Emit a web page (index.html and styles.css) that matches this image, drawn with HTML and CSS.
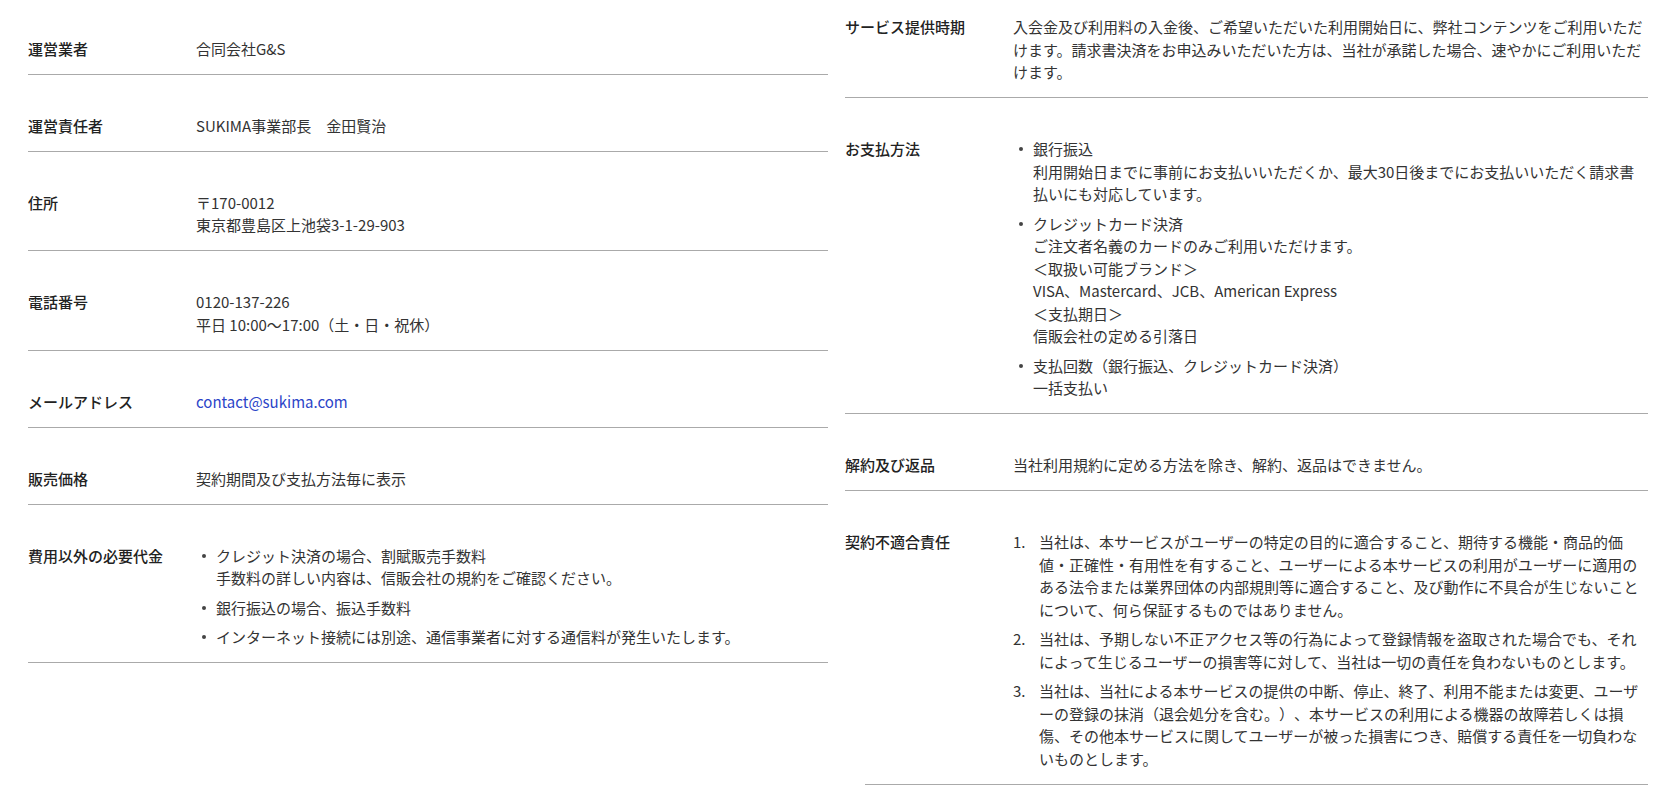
FILE: index.html
```html
<!DOCTYPE html>
<html lang="ja">
<head>
    <meta charset="UTF-8">
    <meta name="viewport" content="width=device-width, initial-scale=1.0">
    <title>特定商取引法に基づく表記</title>
    <link rel="stylesheet" href="styles.css">
</head>
<body>

    <div class="law">
        <!-- 左カラム -->
        <div class="col col-left">
            <div class="row">
                <div class="label">運営業者</div>
                <div class="value">合同会社G&amp;S</div>
            </div>
            <div class="row">
                <div class="label">運営責任者</div>
                <div class="value">SUKIMA事業部長　金田賢治</div>
            </div>
            <div class="row">
                <div class="label">住所</div>
                <div class="value">〒170-0012<br>東京都豊島区上池袋3-1-29-903</div>
            </div>
            <div class="row">
                <div class="label">電話番号</div>
                <div class="value">0120-137-226<br>平日 10:00〜17:00（土・日・祝休）</div>
            </div>
            <div class="row">
                <div class="label">メールアドレス</div>
                <div class="value"><a href="mailto:contact@sukima.com">contact@sukima.com</a></div>
            </div>
            <div class="row">
                <div class="label">販売価格</div>
                <div class="value">契約期間及び支払方法毎に表示</div>
            </div>
            <div class="row">
                <div class="label">費用以外の必要代金</div>
                <div class="value">
                    <ul class="dots">
                        <li>クレジット決済の場合、割賦販売手数料<br>手数料の詳しい内容は、信販会社の規約をご確認ください。</li>
                        <li>銀行振込の場合、振込手数料</li>
                        <li>インターネット接続には別途、通信事業者に対する通信料が発生いたします。</li>
                    </ul>
                </div>
            </div>
        </div>

        <!-- 右カラム -->
        <div class="col col-right">
            <div class="row">
                <div class="label">サービス提供時期</div>
                <div class="value">入会金及び利用料の入金後、ご希望いただいた利用開始日に、弊社コンテンツをご利用いただけます。請求書決済をお申込みいただいた方は、当社が承諾した場合、速やかにご利用いただけます。</div>
            </div>
            <div class="row">
                <div class="label">お支払方法</div>
                <div class="value">
                    <ul class="dots">
                        <li>銀行振込<br>利用開始日までに事前にお支払いいただくか、最大30日後までにお支払いいただく請求書払いにも対応しています。</li>
                        <li>クレジットカード決済<br>ご注文者名義のカードのみご利用いただけます。<br>＜取扱い可能ブランド＞<br>VISA、Mastercard、JCB、American Express<br>＜支払期日＞<br>信販会社の定める引落日</li>
                        <li>支払回数（銀行振込、クレジットカード決済）<br>一括支払い</li>
                    </ul>
                </div>
            </div>
            <div class="row">
                <div class="label">解約及び返品</div>
                <div class="value">当社利用規約に定める方法を除き、解約、返品はできません。</div>
            </div>
            <div class="row no-line">
                <div class="label">契約不適合責任</div>
                <div class="value">
                    <ol class="nums">
                        <li>当社は、本サービスがユーザーの特定の目的に適合すること、期待する機能・商品的価値・正確性・有用性を有すること、ユーザーによる本サービスの利用がユーザーに適用のある法令または業界団体の内部規則等に適合すること、及び動作に不具合が生じないことについて、何ら保証するものではありません。</li>
                        <li>当社は、予期しない不正アクセス等の行為によって登録情報を盗取された場合でも、それによって生じるユーザーの損害等に対して、当社は一切の責任を負わないものとします。</li>
                        <li>当社は、当社による本サービスの提供の中断、停止、終了、利用不能または変更、ユーザーの登録の抹消（退会処分を含む。）、本サービスの利用による機器の故障若しくは損傷、その他本サービスに関してユーザーが被った損害につき、賠償する責任を一切負わないものとします。</li>
                    </ol>
                </div>
            </div>
            <div class="end-rule"></div>
        </div>
    </div>

</body>
</html>
```

FILE: styles.css
```css
body { margin: 0; background: #fff; color: #333; font-family: "Noto Sans CJK JP", "Noto Sans", sans-serif; font-size: 15px; line-height: 1.5; text-spacing-trim: space-all; }
.law { display: grid; grid-template-columns: 800px 803px; column-gap: 17px; padding: 0 28px; align-items: start; }
.row { display: flex; padding: 40px 0 13.5px; border-bottom: 1px solid #aaa; }
.row.no-line { border-bottom: none; }
.col-left .row:first-child { padding-top: 37.5px; }
.col-right .row:first-child { padding-top: 16px; }
.label { width: 168px; flex-shrink: 0; color: #222; font-weight: 500; }
.value { flex: 1; min-width: 0; }
.value a { color: #2b44c8; text-decoration: none; }
.end-rule { margin-left: 20px; border-top: 1px solid #aaa; }

ul.dots, ol.nums { list-style: none; margin: 0; padding: 0; }
ul.dots li { position: relative; padding-left: 20px; }
ul.dots li::before { content: ""; position: absolute; left: 6px; top: 9px; width: 4px; height: 4px; border-radius: 50%; background: #444; }
ol.nums { counter-reset: num; }
ol.nums li { position: relative; padding-left: 26px; counter-increment: num; }
ol.nums li::before { content: counter(num) "."; position: absolute; left: 0; top: 0; }
ul.dots li + li, ol.nums li + li { margin-top: 7px; }
```
